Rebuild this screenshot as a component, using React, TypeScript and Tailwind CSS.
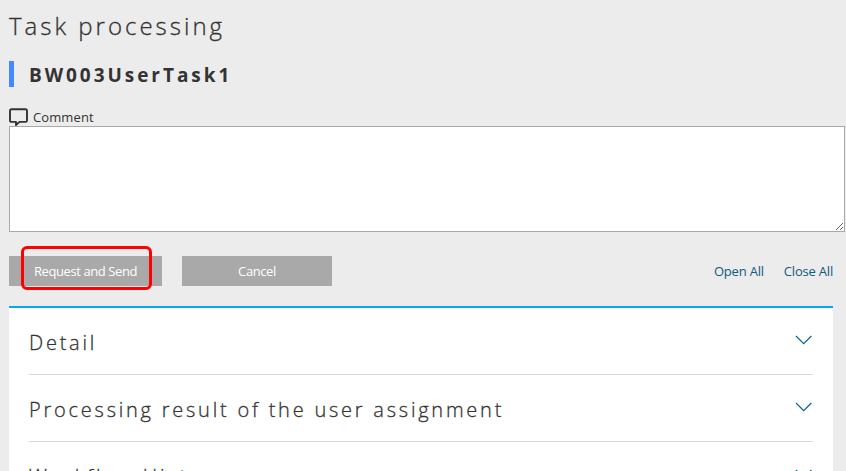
const sections = ['Detail', 'Processing result of the user assignment', 'Workflow History'];

function Chevron() {
  return (
    <svg width="18" height="12" viewBox="0 0 18 12" fill="none" className="mt-[27px]">
      <path d="M1 1 L8.7 8.7 L16.4 1" stroke="#0f628f" strokeWidth="1.2" />
    </svg>
  );
}

export default function App() {
  return (
    <div className="flex h-[471px] w-[846px] flex-col overflow-hidden bg-[#ececec] font-['Open_Sans','Noto_Sans',sans-serif] text-[#333]">
      <h1 className="ml-[9px] mt-[8px] h-[36px] whitespace-nowrap text-[24px] font-light leading-[36px] tracking-[3px] [-webkit-text-stroke:0.3px_#333]">
        Task processing
      </h1>
      <h2 className="ml-[9px] mt-[17px] h-[26px] whitespace-nowrap border-l-[5px] border-[#448aff] pl-[15px] text-[19px] font-bold leading-[28px] tracking-[2.95px]">
        BW003UserTask1
      </h2>
      <div className="ml-[9px] mt-[20px] flex h-[19px]">
        <svg width="19" height="19" viewBox="0 0 19 19" fill="none" className="mt-px block">
          <path
            d="M2.5 1.2 H16.5 Q18 1.2 18 2.7 V12.4 Q18 13.9 16.5 13.9 H10.5 L7 17 V13.9 H2.5 Q1 13.9 1 12.4 V2.7 Q1 1.2 2.5 1.2 Z"
            stroke="#333"
            strokeWidth="1.9"
            strokeLinejoin="round"
          />
        </svg>
        <span className="ml-[5px] text-[13px] leading-[21px] tracking-[0.1px]">Comment</span>
      </div>
      <textarea className="ml-[9px] block h-[106px] w-[836px] shrink-0 resize border border-[#a9a9a9] bg-white outline-none" />
      <div className="ml-[9px] mt-[24px] flex h-[30px] w-[824px] shrink-0 text-[13px] leading-[20px]">
        <button className="relative h-[30px] w-[153px] bg-[#a9a9a9] tracking-[-0.4px] text-white">
          Request and Send
          <span className="absolute left-[12px] top-[-10px] h-[44px] w-[131px] rounded-[6px] border-[3px] border-[#ff0000]" />
        </button>
        <button className="ml-[20px] h-[30px] w-[150px] bg-[#a9a9a9] tracking-[-0.4px] text-white">Cancel</button>
        <div className="ml-auto flex items-center gap-[20px] tracking-[-0.2px] text-[#0f5a80]">
          <a>Open All</a>
          <a>Close All</a>
        </div>
      </div>
      <main className="ml-[9px] mt-[20px] w-[824px] shrink-0 border-t-2 border-[#03a9f4] bg-white px-[20px]">
        {sections.map((title) => (
          <section key={title} className="flex h-[67px] justify-between border-b border-[#dadada]">
            <h3 className="whitespace-nowrap text-[20px] font-light leading-[70px] tracking-[2.77px] [-webkit-text-stroke:0.3px_#333]">
              {title}
            </h3>
            <Chevron />
          </section>
        ))}
      </main>
    </div>
  );
}
